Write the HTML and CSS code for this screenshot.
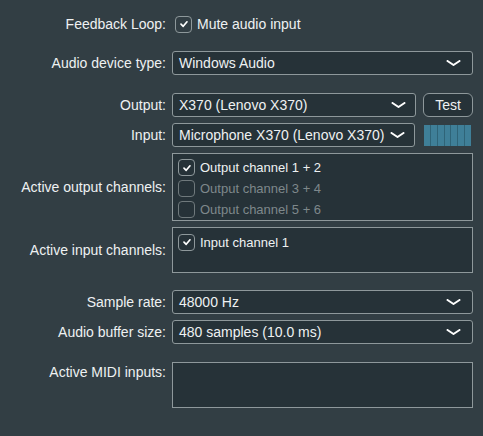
FILE: index.html
```html
<!DOCTYPE html>
<html>
<head>
<meta charset="utf-8">
<link rel="stylesheet" href="styles.css">
</head>
<body>
<div class="panel">
  <div class="row r-feedback">
    <div class="label">Feedback Loop:</div>
    <div class="ctrl toggle">
      <span class="cb checked"><svg viewBox="0 0 10 10" width="10" height="10"><path d="M2 5.2 L4.2 7.3 L8 2.8" /></svg></span>
      <span class="toggle-text">Mute audio input</span>
    </div>
  </div>

  <div class="row r-type">
    <div class="label">Audio device type:</div>
    <div class="ctrl combo"><span>Windows Audio</span><svg class="chev" viewBox="0 0 15 6" width="15" height="6"><path d="M1.5 1 L7.5 5 L13.5 1"/></svg></div>
  </div>

  <div class="row r-output">
    <div class="label">Output:</div>
    <div class="ctrl split">
      <div class="combo grow"><span>X370 (Lenovo X370)</span><svg class="chev" viewBox="0 0 15 6" width="15" height="6"><path d="M1.5 1 L7.5 5 L13.5 1"/></svg></div>
      <div class="btn">Test</div>
    </div>
  </div>

  <div class="row r-input">
    <div class="label">Input:</div>
    <div class="ctrl split">
      <div class="combo grow"><span>Microphone X370 (Lenovo X370)</span><svg class="chev" viewBox="0 0 15 6" width="15" height="6"><path d="M1.5 1 L7.5 5 L13.5 1"/></svg></div>
      <div class="meter"><i></i><i></i><i></i><i></i><i></i><i></i><i></i></div>
    </div>
  </div>

  <div class="row r-outch">
    <div class="label">Active output channels:</div>
    <div class="ctrl list list-out">
      <div class="item"><span class="cb checked"><svg viewBox="0 0 10 10" width="10" height="10"><path d="M2 5.2 L4.2 7.3 L8 2.8" /></svg></span>Output channel 1 + 2</div>
      <div class="item off"><span class="cb"></span>Output channel 3 + 4</div>
      <div class="item off"><span class="cb"></span>Output channel 5 + 6</div>
    </div>
  </div>

  <div class="row r-inch">
    <div class="label">Active input channels:</div>
    <div class="ctrl list list-in">
      <div class="item"><span class="cb checked"><svg viewBox="0 0 10 10" width="10" height="10"><path d="M2 5.2 L4.2 7.3 L8 2.8" /></svg></span>Input channel 1</div>
    </div>
  </div>

  <div class="row r-rate">
    <div class="label">Sample rate:</div>
    <div class="ctrl combo"><span>48000 Hz</span><svg class="chev" viewBox="0 0 15 6" width="15" height="6"><path d="M1.5 1 L7.5 5 L13.5 1"/></svg></div>
  </div>

  <div class="row r-buf">
    <div class="label">Audio buffer size:</div>
    <div class="ctrl combo"><span>480 samples (10.0 ms)</span><svg class="chev" viewBox="0 0 15 6" width="15" height="6"><path d="M1.5 1 L7.5 5 L13.5 1"/></svg></div>
  </div>

  <div class="row r-midi top">
    <div class="label">Active MIDI inputs:</div>
    <div class="ctrl list list-midi"></div>
  </div>
</div>
</body>
</html>
```

FILE: styles.css
```css
html, body {
  margin: 0;
  padding: 0;
  background: #323e44;
}
body {
  width: 483px;
  height: 436px;
  overflow: hidden;
  font-family: "Liberation Sans", Arial, sans-serif;
  font-size: 14px;
  color: #eef1f2;
}
.panel {
  display: flex;
  flex-direction: column;
  padding: 15px 10px 0 0;
}
.row {
  display: grid;
  grid-template-columns: 166px 301px;
  column-gap: 6px;
  align-items: center;
}
.row.top {
  align-items: start;
}
.label {
  text-align: right;
  white-space: nowrap;
}
.top .label {
  line-height: 20px;
}
.r-feedback { height: 18px; }
.r-type { margin-top: 18px; }
.r-output { margin-top: 18px; }
.r-input { margin-top: 6px; }
.r-outch { margin-top: 6px; }
.r-inch { margin-top: 6px; }
.r-rate { margin-top: 17px; }
.r-buf { margin-top: 6px; }
.r-midi { margin-top: 18px; }

.toggle {
  display: flex;
  align-items: center;
  gap: 5px;
  padding-left: 3px;
}
.cb {
  box-sizing: border-box;
  width: 17px;
  height: 17px;
  border: 1px solid #8e989b;
  border-radius: 4px;
  display: inline-flex;
  align-items: center;
  justify-content: center;
  flex: none;
}
.cb svg path {
  fill: none;
  stroke: #ffffff;
  stroke-width: 1.7;
  stroke-linecap: round;
  stroke-linejoin: round;
}

.combo {
  box-sizing: border-box;
  height: 24px;
  background: #263238;
  border: 1px solid #8e989b;
  border-radius: 3px;
  display: flex;
  align-items: center;
  justify-content: space-between;
  padding: 0 11px 0 6px;
  white-space: nowrap;
}
.chev {
  flex: none;
}
.chev path {
  fill: none;
  stroke: #ffffff;
  stroke-width: 2;
  stroke-linecap: round;
  stroke-linejoin: round;
}
.split {
  display: flex;
  align-items: center;
  gap: 7px;
}
.grow {
  flex: 1;
  padding-right: 9px;
}
.btn {
  box-sizing: border-box;
  width: 50px;
  height: 24px;
  border: 1px solid #8e989b;
  border-radius: 6px;
  background: #263238;
  display: flex;
  align-items: center;
  justify-content: center;
}
.meter {
  box-sizing: border-box;
  width: 47px;
  height: 21px;
  margin: 0 2px 0 2px;
  display: flex;
  background: #2f6478;
  gap: 1px;
}
.meter i {
  flex: 1;
  background: #3f7f98;
}
.list {
  box-sizing: border-box;
  background: #263238;
  border: 1px solid #8e989b;
  display: flex;
  flex-direction: column;
  padding: 3px 0 0 5px;
}
.list-out { height: 68px; }
.list-in { height: 46px; }
.list-midi { height: 46px; }
.item {
  height: 22px;
  display: flex;
  align-items: center;
  gap: 5px;
  font-size: 13px;
  white-space: nowrap;
}
.item.off {
  color: #7e888b;
}
.item.off .cb {
  border-color: #6f797c;
}
```
